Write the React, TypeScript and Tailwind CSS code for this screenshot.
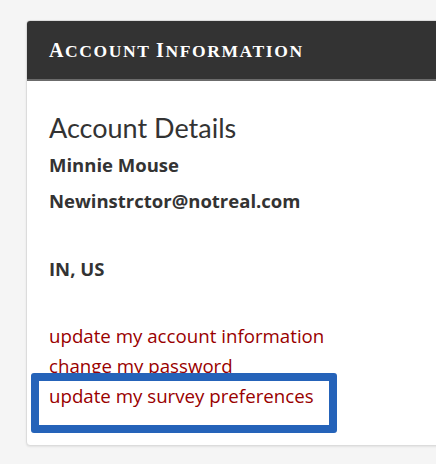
function SmallCaps({ text }: { text: string }) {
  return (
    <>
      {text.split(' ').map((word, i) => (
        <span key={i}>
          {i > 0 && ' '}
          <span className="text-[20px]">{word[0]}</span>
          <span className="text-[17.5px]">{word.slice(1).toUpperCase()}</span>
        </span>
      ))}
    </>
  );
}

export default function App() {
  return (
    <div className="relative h-[464px] w-[436px] overflow-hidden bg-[#f5f5f5] pt-5 pl-[26px]">
      <div className="w-[440px] overflow-hidden rounded-[4px] border border-[#dcdcdc] bg-white shadow-[0_1px_2px_rgba(0,0,0,0.08)]">
        <div className="flex h-[60px] items-center border-b-2 border-[#6b6b6b] bg-[#333333] px-[22px]">
          <h2
            className="font-bold tracking-[1.6px] text-white"
            style={{ fontFamily: '"Liberation Serif", serif' }}
          >
            <SmallCaps text="Account Information" />
          </h2>
        </div>
        <div
          className="px-[22px] pt-[30px] pb-[14px] text-[#333333]"
          style={{ fontFamily: '"Open Sans", Lato, sans-serif' }}
        >
          <h3 className="text-[27px] leading-[34px]" style={{ fontFamily: 'Lato, sans-serif' }}>
            Account Details
          </h3>
          <p className="mt-[2px] text-[18.5px] font-bold leading-[36px]">Minnie Mouse</p>
          <p className="text-[18.5px] font-bold leading-[36px]">Newinstrctor@notreal.com</p>
          <p className="mt-[32px] text-[18.5px] font-bold leading-[36px]">IN, US</p>
          <div className="mt-[34px] flex flex-col text-[18.7px] leading-[30px] text-[#990000]">
            <a href="#">update my account information</a>
            <a href="#">change my password</a>
            <a href="#">update my survey preferences</a>
          </div>
          <div className="h-[20px]" />
        </div>
      </div>
      <div className="absolute left-[31px] top-[373px] h-[60px] w-[306px] rounded-[3px] border-[8px] border-[#2563b9]" />
    </div>
  );
}
